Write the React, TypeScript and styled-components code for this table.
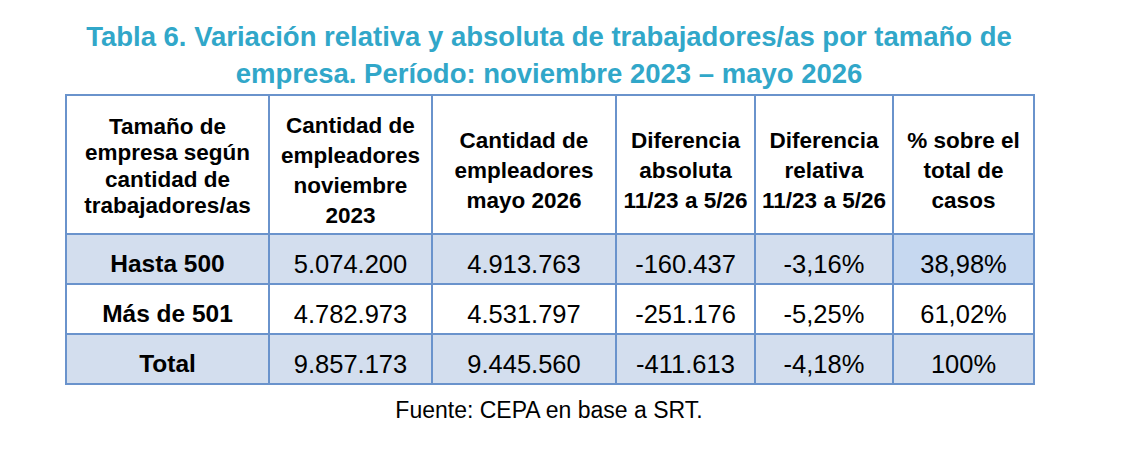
import styled, { createGlobalStyle } from "styled-components";

const GlobalStyle = createGlobalStyle`
  html, body {
    margin: 0;
    padding: 0;
    background: #ffffff;
  }
  body {
    font-family: "Liberation Sans", Arial, sans-serif;
    color: #000000;
  }
`;

const Page = styled.div`
  width: 968px;
  padding: 18px 0 0 65px;
`;

const Title = styled.h1`
  margin: 0 0 2px 0;
  font-family: "Liberation Sans", Arial, sans-serif;
  font-size: 27.5px;
  font-weight: 700;
  line-height: 37px;
  color: #31a7c9;
  text-align: center;
`;

const Table = styled.table`
  width: 968px;
  border-collapse: collapse;
  table-layout: fixed;
  border: 2px solid #6a93cc;
`;

const HeadCell = styled.th<{ $lh: number; $pt: number }>`
  height: 139px;
  box-sizing: border-box;
  padding: ${(p) => p.$pt}px 2px 0 2px;
  border: 2px solid #6a93cc;
  background: #ffffff;
  font-size: 22.5px;
  font-weight: 700;
  line-height: ${(p) => p.$lh}px;
  text-align: center;
  vertical-align: middle;
`;

const Cell = styled.td<{ $bold?: boolean; $fill: string }>`
  height: 50px;
  box-sizing: border-box;
  padding: 9px 2px 0 2px;
  border: 2px solid #6a93cc;
  background: ${(p) => p.$fill};
  font-size: ${(p) => (p.$bold ? 24.5 : 25.5)}px;
  font-weight: ${(p) => (p.$bold ? 700 : 400)};
  line-height: 28px;
  text-align: center;
  vertical-align: middle;
  white-space: nowrap;
`;

const Source = styled.p`
  margin: 12px 0 0 0;
  font-size: 23px;
  text-align: center;
`;

const widths = [203, 163, 184, 139, 138, 141];

const headers: { text: string[]; lh: number; pt: number }[] = [
  { text: ["Tamaño de", "empresa según", "cantidad de", "trabajadores/as"], lh: 26.5, pt: 4 },
  { text: ["Cantidad de", "empleadores", "noviembre", "2023"], lh: 30, pt: 12 },
  { text: ["Cantidad de", "empleadores", "mayo 2026"], lh: 30, pt: 12 },
  { text: ["Diferencia", "absoluta", "11/23 a 5/26"], lh: 30, pt: 12 },
  { text: ["Diferencia", "relativa", "11/23 a 5/26"], lh: 30, pt: 12 },
  { text: ["% sobre el", "total de", "casos"], lh: 30, pt: 12 },
];

const LIGHT = "#d3deee";
const DARK = "#c6d8f0";

const rows: { cells: string[]; fill: string; last?: string }[] = [
  { cells: ["Hasta 500", "5.074.200", "4.913.763", "-160.437", "-3,16%", "38,98%"], fill: LIGHT, last: DARK },
  { cells: ["Más de 501", "4.782.973", "4.531.797", "-251.176", "-5,25%", "61,02%"], fill: "#ffffff" },
  { cells: ["Total", "9.857.173", "9.445.560", "-411.613", "-4,18%", "100%"], fill: LIGHT },
];

export default function App() {
  return (
    <>
      <GlobalStyle />
      <Page>
        <Title>
          Tabla 6. Variación relativa y absoluta de trabajadores/as por tamaño de empresa. Período:
          noviembre 2023 – mayo 2026
        </Title>
        <Table>
          <colgroup>
            {widths.map((w, i) => (
              <col key={i} style={{ width: w }} />
            ))}
          </colgroup>
          <thead>
            <tr>
              {headers.map((h, i) => (
                <HeadCell key={i} $lh={h.lh} $pt={h.pt}>
                  {h.text.map((line, j) => (
                    <div key={j}>{line}</div>
                  ))}
                </HeadCell>
              ))}
            </tr>
          </thead>
          <tbody>
            {rows.map((r, i) => (
              <tr key={i}>
                {r.cells.map((c, j) => (
                  <Cell
                    key={j}
                    $bold={j === 0}
                    $fill={j === r.cells.length - 1 && r.last ? r.last : r.fill}
                  >
                    {c}
                  </Cell>
                ))}
              </tr>
            ))}
          </tbody>
        </Table>
        <Source>Fuente: CEPA en base a SRT.</Source>
      </Page>
    </>
  );
}
